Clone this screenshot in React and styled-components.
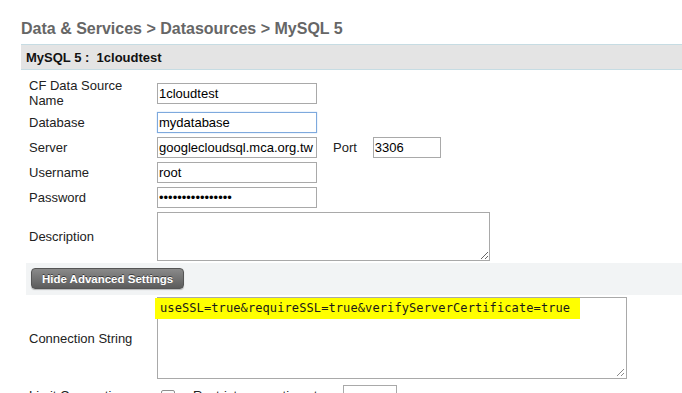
import React from "react";
import styled, { createGlobalStyle } from "styled-components";

const GlobalStyle = createGlobalStyle`
  html, body {
    margin: 0;
    padding: 0;
    overflow: hidden;
    background: #fff;
  }
  body {
    font-family: "Liberation Sans", Arial, sans-serif;
    color: #222;
  }
`;

const Page = styled.div`
  padding: 20px 0 0 21px;
  width: 700px;
`;

const Title = styled.h1`
  margin: 0 0 6px 0;
  font-size: 16px;
  line-height: 18px;
  font-weight: bold;
  color: #666;
`;

const HeaderBar = styled.div`
  height: 24px;
  display: flex;
  align-items: center;
  padding-left: 5px;
  background: #e4e4e4;
  border-top: 1px solid #c6dce3;
  border-bottom: 1px solid #c6dce3;
  font-size: 13px;
  font-weight: bold;
  color: #111;
  white-space: pre;
`;

const Form = styled.div`
  margin: 6px 0 0 5px;
  display: flex;
  flex-direction: column;
`;

const Row = styled.div`
  display: flex;
  align-items: center;
  padding: ${p => p.$top || 2}px 0 2px 0;
`;

const Label = styled.div`
  width: 128px;
  padding-left: 3px;
  font-size: 13px;
  line-height: 15px;
  color: #222;
  flex-shrink: 0;
`;

const InlineLabel = styled.span`
  font-size: 13px;
  color: #222;
  margin: 0 ${p => p.$after || 0}px 0 ${p => p.$before || 0}px;
`;

const Input = styled.input`
  box-sizing: border-box;
  width: ${p => p.$w || 160}px;
  height: 21px;
  margin: 0;
  padding: 1px 1px;
  font-family: "Liberation Sans", Arial, sans-serif;
  font-size: 13px;
  color: #000;
  border: 1px solid ${p => (p.$focused ? "#7ea9dd" : "#a9a9a9")};
  box-shadow: ${p => (p.$focused ? "0 0 1px 0 #9cc3ef" : "none")};
  border-radius: 0;
  outline: none;
  background: #fff;
`;

const TextArea = styled.textarea`
  box-sizing: border-box;
  width: 333px;
  height: 49px;
  margin: 0;
  padding: 2px;
  border: 1px solid #a9a9a9;
  border-radius: 0;
  font-family: "Liberation Sans", Arial, sans-serif;
  font-size: 13px;
  outline: none;
  resize: both;
  display: block;
`;

const AdvancedBar = styled.div`
  height: 32px;
  padding: 5px 0 0 5px;
  box-sizing: border-box;
  background: #f2f4f5;
`;

const DarkButton = styled.button`
  box-sizing: border-box;
  width: 153px;
  height: 21px;
  padding: 0;
  border: 1px solid #555;
  border-radius: 4px;
  background: linear-gradient(#8a8a8a, #5c5c5c);
  box-shadow: 0 1px 1px rgba(0, 0, 0, 0.25);
  color: #fff;
  font-family: "Liberation Sans", Arial, sans-serif;
  font-size: 11.5px;
  font-weight: bold;
  text-shadow: 0 -1px 0 #3a3a3a;
  cursor: pointer;
`;

const CodeBox = styled.div`
  position: relative;
  box-sizing: border-box;
  width: 470px;
  height: 82px;
  border: 1px solid #a9a9a9;
  padding: 0;
  background: #fff;
`;

const Mark = styled.span`
  display: inline-block;
  margin-left: -3px;
  padding: 3px 10px 4px 5px;
  background: #ffff00;
  font-family: "DejaVu Sans Mono", "Liberation Mono", monospace;
  font-size: 12px;
  line-height: 14px;
  letter-spacing: 0.1px;
  color: #1a1a1a;
  white-space: pre;
`;

const Grip = styled.svg`
  position: absolute;
  right: 1px;
  bottom: 1px;
`;

const Checkbox = styled.span`
  display: inline-block;
  width: 12px;
  height: 12px;
  margin: 2px 18px 0 4px;
  border: 1px solid #8f8f8f;
  border-radius: 2px;
  background: linear-gradient(#fdfdfd, #e6e6e6);
`;

function ResizeGrip() {
  return (
    <Grip width="9" height="9" viewBox="0 0 9 9">
      <line x1="1" y1="8" x2="8" y2="1" stroke="#8a8a8a" strokeWidth="1" />
      <line x1="5" y1="8" x2="8" y2="5" stroke="#8a8a8a" strokeWidth="1" />
    </Grip>
  );
}

export default function App() {
  return (
    <Page>
      <GlobalStyle />
      <Title>Data &amp; Services &gt; Datasources &gt; MySQL 5</Title>
      <HeaderBar>{"MySQL 5 :  1cloudtest"}</HeaderBar>
      <Form>
        <Row>
          <Label>CF Data Source<br />Name</Label>
          <Input defaultValue="1cloudtest" />
        </Row>
        <Row>
          <Label>Database</Label>
          <Input defaultValue="mydatabase" $focused />
        </Row>
        <Row>
          <Label>Server</Label>
          <Input defaultValue="googlecloudsql.mca.org.tw" />
          <InlineLabel $before={16} $after={16}>Port</InlineLabel>
          <Input defaultValue="3306" $w={68} />
        </Row>
        <Row>
          <Label>Username</Label>
          <Input defaultValue="root" />
        </Row>
        <Row>
          <Label>Password</Label>
          <Input type="password" defaultValue="mysecretpassw0rd" />
        </Row>
        <Row>
          <Label>Description</Label>
          <TextArea defaultValue="" />
        </Row>
        <AdvancedBar>
          <DarkButton type="button">Hide Advanced Settings</DarkButton>
        </AdvancedBar>
        <Row>
          <Label>Connection String</Label>
          <CodeBox>
            <Mark>useSSL=true&amp;requireSSL=true&amp;verifyServerCertificate=true</Mark>
            <ResizeGrip />
          </CodeBox>
        </Row>
        <Row $top={4}>
          <Label>Limit Connections</Label>
          <Checkbox />
          <InlineLabel $after={18}>Restrict connections to</InlineLabel>
          <Input $w={54} defaultValue="" />
        </Row>
      </Form>
    </Page>
  );
}
